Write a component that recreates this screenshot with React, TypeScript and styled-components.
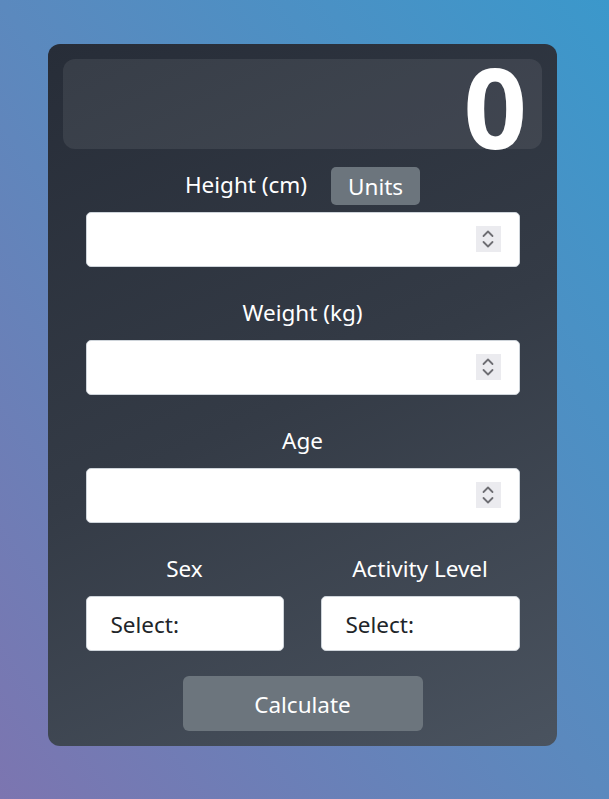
import React from "react";
import styled, { createGlobalStyle } from "styled-components";

const GlobalStyle = createGlobalStyle`
  html, body {
    margin: 0;
    padding: 0;
    height: 100%;
  }
  body {
    min-height: 799px;
    background: linear-gradient(to top right, #7c75b0 0%, #5b89be 50%, #3b98cb 100%);
    font-family: "Noto Sans", "Open Sans", sans-serif;
  }
`;

const Page = styled.div`
  padding: 44px 0 0 48px;
`;

const Card = styled.div`
  width: 509px;
  box-sizing: border-box;
  padding: 15px;
  border-radius: 12px;
  background: linear-gradient(155deg, #272d38 0%, #343b46 50%, #4a535f 100%);
  display: flex;
  flex-direction: column;
  align-items: center;
`;

const Display = styled.div`
  align-self: stretch;
  height: 90px;
  border-radius: 12px;
  background: rgba(255, 255, 255, 0.08);
  display: flex;
  justify-content: flex-end;
  padding-right: 15px;
  overflow: visible;
`;

const Result = styled.span`
  color: #ffffff;
  font-weight: 700;
  font-size: 111px;
  line-height: 94px;
  height: 90px;
`;

const Form = styled.div`
  width: 434px;
  margin-top: 18px;
  display: flex;
  flex-direction: column;
  gap: 28px;
`;

const Group = styled.div`
  display: flex;
  flex-direction: column;
  gap: 7px;
`;

const LabelRow = styled.div`
  height: 38px;
  display: flex;
  align-items: center;
  justify-content: center;
  gap: 24px;
`;

const Label = styled.label`
  color: #ffffff;
  font-size: 22.5px;
  line-height: 30px;
  margin-top: -3px;
`;

const UnitsButton = styled.button`
  width: 89px;
  height: 38px;
  border: none;
  border-radius: 5px;
  background: #6c757d;
  color: #ffffff;
  font-family: inherit;
  font-size: 22.5px;
  padding: 1px 0 0;
`;

const InputWrap = styled.div`
  position: relative;
`;

const NumberInput = styled.input`
  display: block;
  width: 100%;
  height: 55px;
  box-sizing: border-box;
  border: 1px solid #ced4da;
  border-radius: 5px;
  background: #ffffff;
  font-family: inherit;
  font-size: 22px;
  padding: 0 24px;
  -moz-appearance: textfield;
  &::-webkit-inner-spin-button,
  &::-webkit-outer-spin-button {
    -webkit-appearance: none;
    margin: 0;
  }
`;

const Spinner = styled.div`
  position: absolute;
  right: 19px;
  top: 14px;
  width: 25px;
  height: 26px;
  background: #ebebef;
  display: flex;
  align-items: center;
  justify-content: center;
  pointer-events: none;
`;

const Columns = styled.div`
  display: grid;
  grid-template-columns: 198px 199px;
  column-gap: 37px;
`;

const Select = styled.select`
  display: block;
  width: 100%;
  height: 55px;
  box-sizing: border-box;
  border: 1px solid #ced4da;
  border-radius: 5px;
  background: #ffffff;
  color: #212529;
  font-family: inherit;
  font-size: 22.5px;
  padding: 2px 24px 0;
  appearance: none;
  -webkit-appearance: none;
`;

const CalcButton = styled.button`
  width: 240px;
  height: 55px;
  margin-top: 25px;
  border: none;
  border-radius: 6px;
  background: #6c757d;
  color: #ffffff;
  font-family: inherit;
  font-size: 22.5px;
  padding-top: 2px;
`;

const SpinIcon = () => (
  <svg width="14" height="20" viewBox="0 0 14 20" fill="none" stroke="#6e6e73" strokeWidth="1.8" strokeLinecap="round" strokeLinejoin="round">
    <polyline points="2.5,7 7,2.5 11.5,7" />
    <polyline points="2.5,13 7,17.5 11.5,13" />
  </svg>
);

const NumberField = ({ label, extra }: { label: string; extra?: React.ReactNode }) => (
  <Group>
    <LabelRow>
      <Label>{label}</Label>
      {extra}
    </LabelRow>
    <InputWrap>
      <NumberInput type="number" />
      <Spinner>
        <SpinIcon />
      </Spinner>
    </InputWrap>
  </Group>
);

export default function App() {
  return (
    <>
      <GlobalStyle />
      <Page>
        <Card>
          <Display>
            <Result>0</Result>
          </Display>
          <Form>
            <NumberField label="Height (cm)" extra={<UnitsButton>Units</UnitsButton>} />
            <NumberField label="Weight (kg)" />
            <NumberField label="Age" />
            <Columns>
              <Group>
                <LabelRow>
                  <Label>Sex</Label>
                </LabelRow>
                <Select defaultValue="">
                  <option value="">Select:</option>
                  <option value="m">Male</option>
                  <option value="f">Female</option>
                </Select>
              </Group>
              <Group>
                <LabelRow>
                  <Label>Activity Level</Label>
                </LabelRow>
                <Select defaultValue="">
                  <option value="">Select:</option>
                  <option value="1">Sedentary</option>
                  <option value="2">Active</option>
                </Select>
              </Group>
            </Columns>
          </Form>
          <CalcButton>Calculate</CalcButton>
        </Card>
      </Page>
    </>
  );
}
